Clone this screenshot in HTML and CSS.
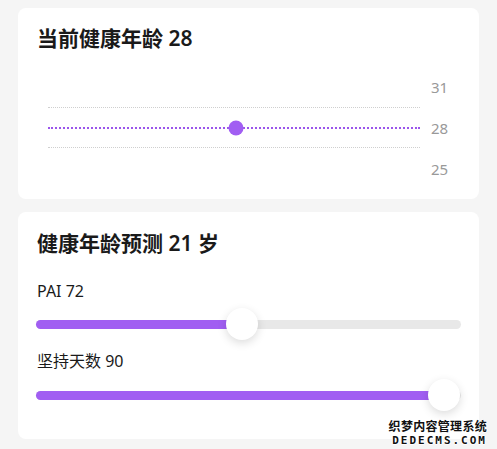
FILE: index.html
```html
<!DOCTYPE html>
<html lang="zh-CN">
<head>
    <meta charset="UTF-8">
    <meta name="viewport" content="width=device-width, initial-scale=1.0">
    <title>健康年龄</title>
    <link rel="stylesheet" href="styles.css">
</head>
<body>
    <div class="pageCls">
        <div class="cardCls currentCardCls">
            <h1 class="cardTitleCls">当前健康年龄 28</h1>
            <div class="chartCls">
                <div class="chartRowCls">
                    <div class="chartLineCls"></div>
                    <span class="chartLabelCls">31</span>
                </div>
                <div class="chartRowCls">
                    <div class="chartLineCls">
                        <div class="ageLineCls"></div>
                        <div class="ageDotCls" style="left: 50.5%"></div>
                    </div>
                    <span class="chartLabelCls">28</span>
                </div>
                <div class="chartRowCls">
                    <div class="chartLineCls"></div>
                    <span class="chartLabelCls">25</span>
                </div>
            </div>
        </div>
        <div class="cardCls predictCardCls">
            <h1 class="cardTitleCls">健康年龄预测 21 岁</h1>
            <div class="fieldCls firstFieldCls">
                <label class="fieldLabelCls">PAI 72</label>
                <div class="sliderCls">
                    <div class="trackCls">
                        <div class="fillCls" style="width: 48.5%"></div>
                        <div class="thumbCls" style="left: 48.5%"></div>
                    </div>
                </div>
            </div>
            <div class="fieldCls">
                <label class="fieldLabelCls">坚持天数 90</label>
                <div class="sliderCls">
                    <div class="trackCls">
                        <div class="fillCls" style="width: 96%"></div>
                        <div class="thumbCls" style="left: 96%"></div>
                    </div>
                </div>
            </div>
        </div>
    </div>
    <div class="watermarkCls">
        <span class="wmTopCls">织梦内容管理系统</span>
        <span class="wmBottomCls">DEDECMS.COM</span>
    </div>
</body>
</html>
```

FILE: styles.css
```css
*{margin:0;padding:0;box-sizing:border-box;}
body{background-color:#f5f5f5;font-family:"Noto Sans","Noto Sans CJK SC",sans-serif;color:#1a1a1a;width:497px;height:449px;overflow:hidden;position:relative;}
.pageCls{display:flex;flex-direction:column;gap:13px;padding:8px 18px 0 18px;}
.cardCls{background-color:#fff;border-radius:8px;padding:18px;}
.currentCardCls{height:191px;padding-bottom:10px;}
.predictCardCls{height:227px;}
.cardTitleCls{font-size:21px;font-weight:600;line-height:24px;padding-left:1px;}
.predictCardCls .cardTitleCls{line-height:26px;}

/* chart */
.chartCls{margin-top:16px;display:flex;flex-direction:column;}
.chartRowCls{height:41px;display:flex;align-items:center;}
.chartRowCls:nth-child(2){border-top:1px dotted #cfcfcf;border-bottom:1px dotted #cfcfcf;margin:0 41px 0 12px;overflow:visible;}
.chartLineCls{position:relative;flex:1;height:2px;margin-left:12px;}
.chartRowCls:nth-child(2) .chartLineCls{margin-left:0;}
.chartLabelCls{width:41px;padding-left:11px;font-size:15px;color:#999;}
.chartRowCls:nth-child(2) .chartLabelCls{margin-right:-41px;}
.ageLineCls{border-top:2px dotted #9b55ec;width:100%;}
.ageDotCls{position:absolute;top:1px;width:15px;height:15px;border-radius:50%;background-color:#a15ef2;transform:translate(-50%,-50%);}

/* sliders */
.fieldCls{display:flex;flex-direction:column;margin-top:10px;}
.firstFieldCls{margin-top:24px;}
.fieldLabelCls{font-size:16px;line-height:22px;padding-left:1px;}
.sliderCls{height:32px;display:flex;align-items:center;margin-top:6px;}
.fieldCls:last-child .sliderCls{margin-top:7px;}
.trackCls{position:relative;width:100%;height:9px;border-radius:5px;background-color:#e8e8e8;}
.fillCls{height:100%;border-radius:5px;background-color:#a15ef2;}
.thumbCls{position:absolute;top:50%;width:32px;height:32px;border-radius:50%;background-color:#fff;box-shadow:0 3px 10px rgba(0,0,0,0.14);transform:translate(-50%,-50%);}

/* watermark */
.watermarkCls{position:absolute;right:10px;bottom:3px;display:flex;flex-direction:column;align-items:flex-end;line-height:1;color:#111;font-family:"Noto Sans CJK SC",monospace;font-weight:700;text-shadow:1px 0 #fff,-1px 0 #fff,0 1px #fff,0 -1px #fff;}
.wmTopCls{font-size:12px;letter-spacing:0.3px;}
.wmBottomCls{font-family:"DejaVu Sans Mono",monospace;font-size:11px;letter-spacing:2px;margin-top:3px;}
```
